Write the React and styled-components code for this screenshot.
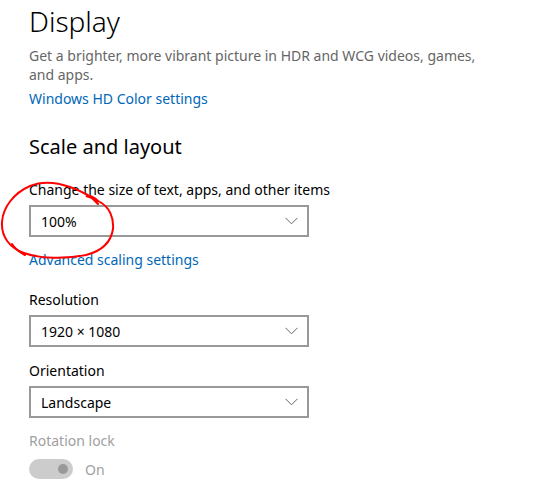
import React from "react";
import styled, { createGlobalStyle } from "styled-components";

const GlobalStyle = createGlobalStyle`
    html, body {
        margin: 0;
        padding: 0;
        background: #ffffff;
    }
    body {
        font-family: "Segoe UI", "Noto Sans", "Liberation Sans", sans-serif;
        color: #000000;
    }
`;

const Page = styled.div`
    position: relative;
    width: 553px;
    height: 498px;
    overflow: hidden;
    padding-left: 29px;
    box-sizing: border-box;
`;

const Title = styled.h1`
    margin: 0;
    padding-top: 2px;
    font-size: 28px;
    font-weight: 300;
    line-height: 38px;
`;

const Description = styled.p`
    margin: 6px 0 0;
    width: 470px;
    font-size: 14px;
    line-height: 19px;
    color: #666666;
`;

const Link = styled.a`
    display: block;
    margin-top: ${(p) => p.$top || 0}px;
    font-size: 14px;
    line-height: 19px;
    color: #0067b8;
    text-decoration: none;
`;

const SectionTitle = styled.h2`
    margin: 26px 0 0;
    font-size: 20px;
    font-weight: 400;
    line-height: 26px;
`;

const Label = styled.div`
    margin-top: ${(p) => p.$top || 0}px;
    font-size: 14px;
    line-height: 19px;
    color: ${(p) => (p.$disabled ? "#a0a0a0" : "#000000")};
`;

const Select = styled.div`
    margin-top: 6px;
    width: 280px;
    height: 32px;
    box-sizing: border-box;
    border: 2px solid #999999;
    display: flex;
    align-items: center;
    justify-content: space-between;
    padding: 0 9px 0 10px;
    font-size: 14px;
`;

const ToggleRow = styled.div`
    margin-top: 9px;
    display: flex;
    align-items: center;
    gap: 12px;
    font-size: 14px;
    color: #a0a0a0;
`;

const Toggle = styled.div`
    width: 44px;
    height: 20px;
    border-radius: 10px;
    background: #cccccc;
    display: flex;
    align-items: center;
    justify-content: flex-end;
    padding-right: 5px;
    box-sizing: border-box;

    &::after {
        content: "";
        width: 10px;
        height: 10px;
        border-radius: 50%;
        background: #999999;
    }
`;

const Scribble = styled.svg`
    position: absolute;
    left: 0;
    top: 0;
    pointer-events: none;
`;

const Chevron = () => (
    <svg width="13" height="8" viewBox="0 0 13 8">
        <path d="M0.5 0.8 L6.5 6.8 L12.5 0.8" fill="none" stroke="#666666" strokeWidth="1" />
    </svg>
);

function Dropdown({ value }) {
    return (
        <Select>
            <span>{value}</span>
            <Chevron />
        </Select>
    );
}

export default function App() {
    return (
        <Page>
            <GlobalStyle />
            <Title>Display</Title>
            <Description>
                Get a brighter, more vibrant picture in HDR and WCG videos, games, and apps.
            </Description>
            <Link $top={5}>Windows HD Color settings</Link>

            <SectionTitle>Scale and layout</SectionTitle>
            <Label $top={20}>Change the size of text, apps, and other items</Label>
            <Dropdown value="100%" />
            <Link $top={13}>Advanced scaling settings</Link>

            <Label $top={21}>Resolution</Label>
            <Dropdown value="1920 × 1080" />
            <Label $top={14}>Orientation</Label>
            <Dropdown value="Landscape" />
            <Label $top={13} $disabled>Rotation lock</Label>
            <ToggleRow>
                <Toggle />
                <span>On</span>
            </ToggleRow>

            <Scribble width="553" height="498" viewBox="0 0 553 498">
                <path
                    d="M98 204 C92 197 82 191 70 187 C56 182 42 181 30 186 C14 193 3 207 2 222 C1 237 10 248 24 253 C40 259 66 259 86 255 C102 251 111 242 113 229 C114 217 109 207 100 202 C95 199 90 197 86 196 C90 195 95 198 98 201"
                    fill="none"
                    stroke="#ff0000"
                    strokeWidth="2"
                    strokeLinecap="round"
                />
                <path d="M12 244 C15 249 19 252 25 255" fill="none" stroke="#ff0000" strokeWidth="2" strokeLinecap="round" />
            </Scribble>
        </Page>
    );
}
